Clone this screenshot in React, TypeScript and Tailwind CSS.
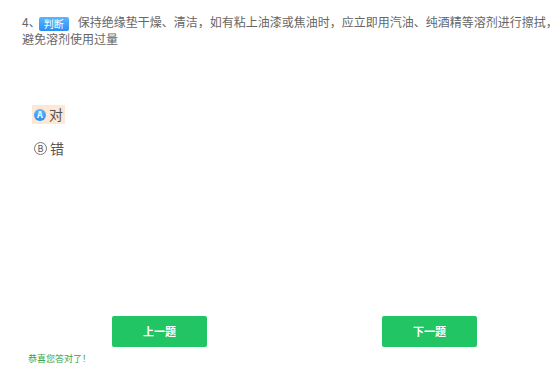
import React from "react";

export default function App() {
  const font = { fontFamily: '"Noto Sans CJK SC", "Noto Sans", sans-serif' };
  return (
    <div className="w-[558px] h-[374px] bg-white overflow-hidden flex flex-col" style={font}>
      <div className="pl-[22px] pt-[14px] w-[620px] text-[12px] leading-[15px] text-[#666] whitespace-nowrap">
        <span>4</span>
        <span className="tracking-[-5px]">、</span>
        <span className="inline-block align-[-1px] w-[30px] h-[14px] leading-[14px] rounded-[2px] bg-gradient-to-b from-[#5ab6ff] to-[#2a8ef2] text-white text-[10px] text-center ml-[3px]">
          判断
        </span>
        <span className="ml-[9px]">
          保持绝缘垫干燥、清洁，如有粘上油漆或焦油时，应立即用汽油、纯酒精等溶剂进行擦拭，但应
        </span>
        <br />
        <span>避免溶剂使用过量</span>
      </div>

      <div className="pl-[32px] mt-[59px] flex flex-col gap-[15px]">
        <div className="flex">
          <div className="flex items-center gap-[3px] bg-[#fde7d5] pl-[2px] pr-[2px] h-[19px]">
            <span className="w-[12px] h-[12px] rounded-full bg-gradient-to-b from-[#5db6ff] to-[#2a8ef2] text-white text-[9px] font-bold leading-[12px] text-center">
              A
            </span>
            <span className="text-[14px] text-[#555] leading-[19px]">对</span>
          </div>
        </div>
        <div className="flex">
          <div className="flex items-center gap-[3px] pl-[2px] pr-[2px] h-[19px]">
            <span className="w-[13px] h-[13px] rounded-full border border-[#777] text-[#555] text-[9px] leading-[11px] text-center">
              B
            </span>
            <span className="text-[14px] text-[#555] leading-[19px]">错</span>
          </div>
        </div>
      </div>

      <div className="mt-auto pl-[112px] flex gap-[175px]">
        <button className="w-[95px] h-[31px] rounded-[2px] bg-[#21c563] text-white text-[11px] font-bold">
          上一题
        </button>
        <button className="w-[95px] h-[31px] rounded-[2px] bg-[#21c563] text-white text-[11px] font-bold">
          下一题
        </button>
      </div>
      <div className="pl-[28px] mt-[7px] mb-[10px] text-[9px] leading-[10px] text-[#3aa34a]">
        恭喜您答对了！
      </div>
    </div>
  );
}
